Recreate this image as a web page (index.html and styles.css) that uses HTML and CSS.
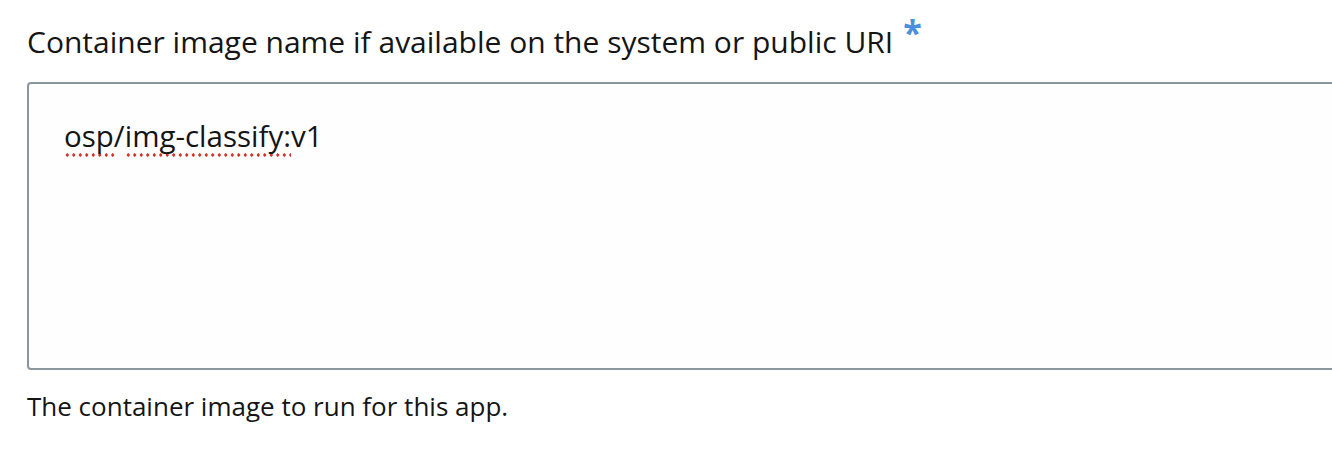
FILE: index.html
```html
<!DOCTYPE html>
<html lang="en">
<head>
<meta charset="utf-8">
<title>Container image</title>
<link rel="stylesheet" href="styles.css">
</head>
<body>
<div class="form-group">
  <label class="label">Container image name if available on the system or public URI<span class="required">*</span></label>
  <div class="field"><span class="misspelled">osp</span>/<span class="misspelled">img-classify:</span>v1</div>
  <p class="help">The container image to run for this app.</p>
</div>
</body>
</html>
```
FILE: styles.css
```css
html, body {
  margin: 0;
  padding: 0;
  background: #ffffff;
  overflow: hidden;
}
body {
  font-family: "Open Sans", "Liberation Sans", sans-serif;
  color: #151515;
  width: 1332px;
  height: 450px;
}
.form-group {
  padding: 20px 0 0 27px;
}
.label {
  display: block;
  font-size: 30px;
  line-height: 40px;
  height: 40px;
}
.required {
  color: #4a90dc;
  font-size: 34px;
  font-weight: 700;
  position: relative;
  top: -8px;
  margin-left: 10px;
}
.field {
  margin-top: 22px;
  width: 1330px;
  height: 288px;
  border: 2px solid #8a969e;
  border-radius: 4px;
  box-sizing: border-box;
  padding: 32px 35px;
  font-size: 29.5px;
  line-height: 40px;
  background: #fefefe;
}
.misspelled {
  background-image: radial-gradient(circle, #d0362a 1.5px, transparent 1.8px);
  background-size: 6.5px 4px;
  background-repeat: repeat-x;
  background-position: 0 100%;
  padding-bottom: 1px;
}
.help {
  margin: 18px 0 0 0;
  font-size: 26px;
  line-height: 36px;
}
```
